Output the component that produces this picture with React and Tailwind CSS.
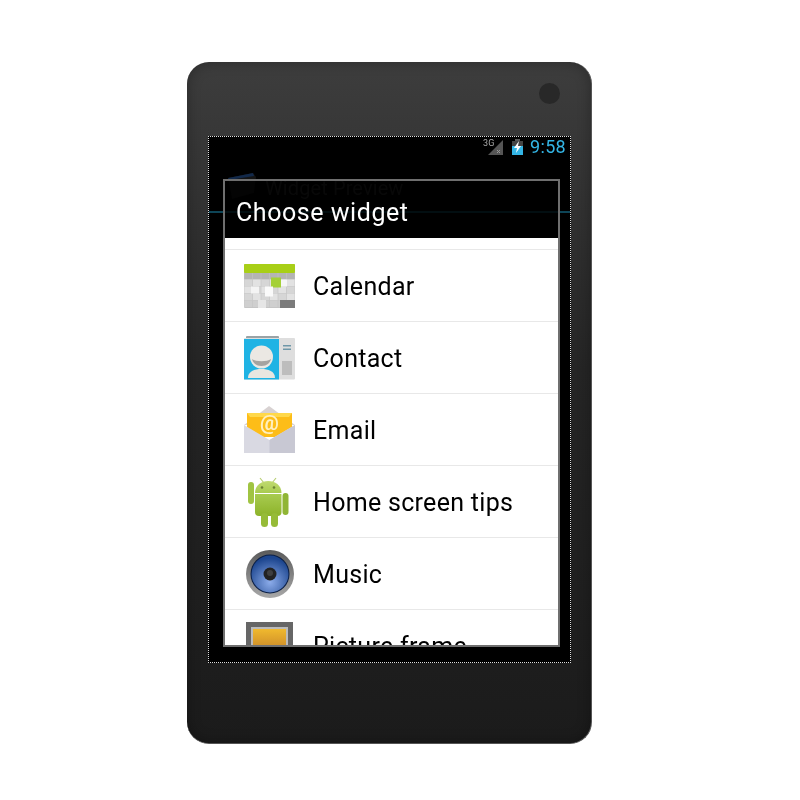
import React from "react";

function CalendarIcon() {
  const cells = [];
  for (let r = 0; r < 5; r++) for (let c = 0; c < 6; c++) {
    cells.push(<rect key={r + "-" + c} x={c * 8.5 + 0.3} y={9.5 + r * 7} width="7.9" height="6.6" fill={r === 0 ? "#b4b4b4" : r === 4 ? "#cfcfcf" : (r + c) % 2 ? "#d6d6d6" : "#e2e2e2"} />);
  }
  return (
    <svg width="52" height="46" viewBox="0 0 52 46">
      <rect x="0" y="1" width="51" height="44" rx="1" fill="#c4c4c4" />
      {cells}
      <rect x="0" y="1" width="51" height="9" rx="1" fill="#a8cf17" />
      <rect x="36" y="37" width="15" height="8" fill="#7b7b7b" />
      <rect x="37" y="16.5" width="6" height="7" fill="#f6f6f6" />
      <rect x="27" y="14.5" width="10" height="10" fill="#a4d037" />
      <rect x="7" y="23.5" width="8" height="7" fill="#f4f4f4" />
      <rect x="21" y="23.5" width="8" height="10" fill="#fafafa" />
      <rect x="14" y="37" width="8" height="8" fill="#e6e6e6" />
    </svg>
  );
}

function ContactIcon() {
  return (
    <svg width="52" height="46" viewBox="0 0 52 46">
      <rect x="2" y="1" width="33" height="4" rx="1" fill="#9aa3a6" />
      <rect x="0" y="3" width="51" height="41.5" rx="1" fill="#dedede" />
      <rect x="0" y="4" width="35" height="40.5" fill="#1fb3e4" />
      <rect x="39" y="10" width="8" height="1.5" fill="#6f97a8" />
      <rect x="39" y="13.5" width="8" height="1.5" fill="#6f97a8" />
      <rect x="38" y="26" width="10" height="14" fill="#bdbdbd" />
      <path d="M4 43c0-7 7-9 13.5-9S31 36 31 43z" fill="#e9e6e0" />
      <circle cx="17.5" cy="22" r="11.5" fill="#ebe8e3" />
      <path d="M8 24c4 3 15 3 19 0-1 4-4 7-9.5 7S9 28 8 24z" fill="#a5a3a0" />
    </svg>
  );
}

function EmailIcon() {
  return (
    <svg width="52" height="50" viewBox="0 0 52 50">
      <path d="M0 20 25 1 51 20z" fill="#d8d2d2" />
      <path d="M3 8h45v24H3z" fill="#fdbd18" />
      <path d="M3 8h45l-3 4H6z" fill="#ffd84a" />
      <text x="25.5" y="25" textAnchor="middle" fontFamily="Roboto, sans-serif" fontWeight="700" fontSize="21" fill="#fff0c0">@</text>
      <path d="M0 20 25.5 35 51 20v28H0z" fill="#d9d9e2" />
      <path d="M25.5 35 51 20v28H25.5z" fill="#c8c8d3" />
    </svg>
  );
}

function AndroidIcon() {
  return (
    <svg width="52" height="50" viewBox="0 0 52 50">
      <defs>
        <linearGradient id="g1" x1="0" y1="0" x2="0" y2="1">
          <stop offset="0" stopColor="#c0da70" />
          <stop offset="1" stopColor="#a8cb50" />
        </linearGradient>
        <linearGradient id="g2" x1="0" y1="0" x2="0" y2="1">
          <stop offset="0" stopColor="#a8cb50" />
          <stop offset="1" stopColor="#8db32a" />
        </linearGradient>
      </defs>
      <path d="M16 1 20 6M32 1 28 6" stroke="#b9cf75" strokeWidth="1.2" />
      <path d="M11 16C11 0 37.5 0 37.5 16z" fill="url(#g1)" />
      <circle cx="18" cy="10.5" r="1.3" fill="#6b8134" />
      <circle cx="30" cy="10.5" r="1.3" fill="#6b8134" />
      <path d="M11 17h26.5v18a4 4 0 0 1-4 4H15a4 4 0 0 1-4-4z" fill="url(#g2)" />
      <rect x="4" y="5" width="6" height="22" rx="3" fill="#a0c442" />
      <rect x="38.5" y="16" width="6" height="22" rx="3" fill="#90b535" />
      <rect x="17" y="36" width="7" height="14" rx="3.5" fill="#96bb38" />
      <rect x="27" y="36" width="7" height="14" rx="3.5" fill="#96bb38" />
    </svg>
  );
}

function MusicIcon() {
  return (
    <svg width="50" height="50" viewBox="0 0 50 50">
      <defs>
        <linearGradient id="m1" x1="0" y1="0" x2="0" y2="1">
          <stop offset="0" stopColor="#5a5a5a" />
          <stop offset="1" stopColor="#a8a8a8" />
        </linearGradient>
        <radialGradient id="m2" cx="0.5" cy="0.72" r="0.65">
          <stop offset="0" stopColor="#8cacea" />
          <stop offset="1" stopColor="#1d468f" />
        </radialGradient>
      </defs>
      <circle cx="25" cy="25" r="24" fill="url(#m1)" />
      <circle cx="25" cy="25" r="19.5" fill="#0b1f45" />
      <circle cx="25" cy="25" r="18.5" fill="url(#m2)" />
      <circle cx="25" cy="25" r="6.5" fill="#222" />
      <circle cx="25" cy="24" r="3" fill="#3f3f3f" />
    </svg>
  );
}

function FrameIcon() {
  return (
    <svg width="50" height="50" viewBox="0 0 50 50">
      <defs>
        <linearGradient id="f1" x1="0" y1="0" x2="0" y2="1">
          <stop offset="0" stopColor="#f0b92e" />
          <stop offset="0.5" stopColor="#cf8f2a" />
        </linearGradient>
      </defs>
      <rect x="1" y="1" width="47" height="49" fill="#666" />
      <rect x="6" y="6" width="37" height="40" fill="#bbb" />
      <rect x="8" y="8" width="33" height="36" fill="url(#f1)" />
    </svg>
  );
}

const ITEMS = [
  ["Calendar", CalendarIcon],
  ["Contact", ContactIcon],
  ["Email", EmailIcon],
  ["Home screen tips", AndroidIcon],
  ["Music", MusicIcon],
  ["Picture frame", FrameIcon],
];

function Row({ label, Icon }) {
  return (
    <div className="h-[72px] shrink-0 flex items-center border-b border-[#e8e8e8]">
      <div className="w-[88px] shrink-0 pl-[19px]">
        <div className="w-[52px] flex justify-center"><Icon /></div>
      </div>
      <span className="text-[25px] leading-none text-black tracking-[0.3px] whitespace-nowrap pt-[2px]">{label}</span>
    </div>
  );
}

export default function App() {
  return (
    <div className="w-[800px] h-[800px] bg-white pt-[62px] pl-[187px] [font-family:Roboto,sans-serif]">
      <div className="w-[405px] h-[682px] rounded-[22px] bg-gradient-to-b from-[#3d3d3d] via-[#252525] via-45% to-[#1b1b1b] border-r border-b border-[#555] shadow-[inset_0_0_14px_rgba(0,0,0,0.3)] pt-[74px] pl-[21px] relative blur-[0.4px]">
        <div className="absolute top-[21px] right-[31px] w-[21px] h-[21px] rounded-full bg-[#282828]" />
        <div className="w-[363px] h-[527px] bg-black border border-dotted border-[#ddd] relative">
          <div className="h-[20px] flex items-center justify-end pr-[4px]">
            <div className="relative w-[17px] h-[17px] mr-[7px]">
              <svg width="17" height="17" viewBox="0 0 17 17" className="absolute left-0 top-0">
                <path d="M16 1V16H1z" fill="#555" />
                <path d="M10 11l3 3M13 11l-3 3" stroke="#999" strokeWidth="1" />
              </svg>
              <span className="absolute left-[-4px] top-[-2px] text-[9px] leading-[12px] text-[#aaa]">3G</span>
            </div>
            <svg width="13" height="16" viewBox="0 0 13 16" className="mr-[6px]">
              <rect x="4" y="0" width="5" height="2" fill="#555" />
              <rect x="1" y="2" width="11" height="14" fill="#33b5e5" />
              <rect x="1" y="2" width="11" height="5" fill="#444" />
              <path d="M8 2 3 9h3l-1 5 5-7H7z" fill="#fff" />
            </svg>
            <span className="text-[18px] leading-none text-[#33b5e5] tracking-[0.3px]">9:58</span>
          </div>
          <div className="h-[56px] flex items-center border-b-2 border-[#0e4557] pl-[16px]">
            <svg width="32" height="30" viewBox="0 0 32 30" className="mt-[2px]">
              <path d="M3 8 28 3l3 4-2 16-22 6z" fill="#141414" />
              <path d="M3 8 28 3l1 3-25 4z" fill="#12294a" />
            </svg>
            <span className="ml-[8px] text-[20px] leading-none text-[#2a2a2a] tracking-[0.1px] mt-[7px]">Widget Preview</span>
          </div>
          <div className="absolute left-[14px] top-[42px] w-[337px] h-[468px] border-2 border-[#6f6f6f] flex flex-col overflow-hidden">
            <div className="h-[57px] shrink-0 bg-black/80 flex items-center pl-[11px] pt-[6px]">
              <span className="text-[25px] leading-none text-white tracking-[0.55px]">Choose widget</span>
            </div>
            <div className="flex-1 min-h-0 bg-white flex flex-col overflow-hidden pt-[11px]">
              <div className="border-t border-[#e8e8e8]" />
              {ITEMS.map(([label, Icon]) => <Row key={label} label={label} Icon={Icon} />)}
            </div>
          </div>
        </div>
      </div>
    </div>
  );
}
